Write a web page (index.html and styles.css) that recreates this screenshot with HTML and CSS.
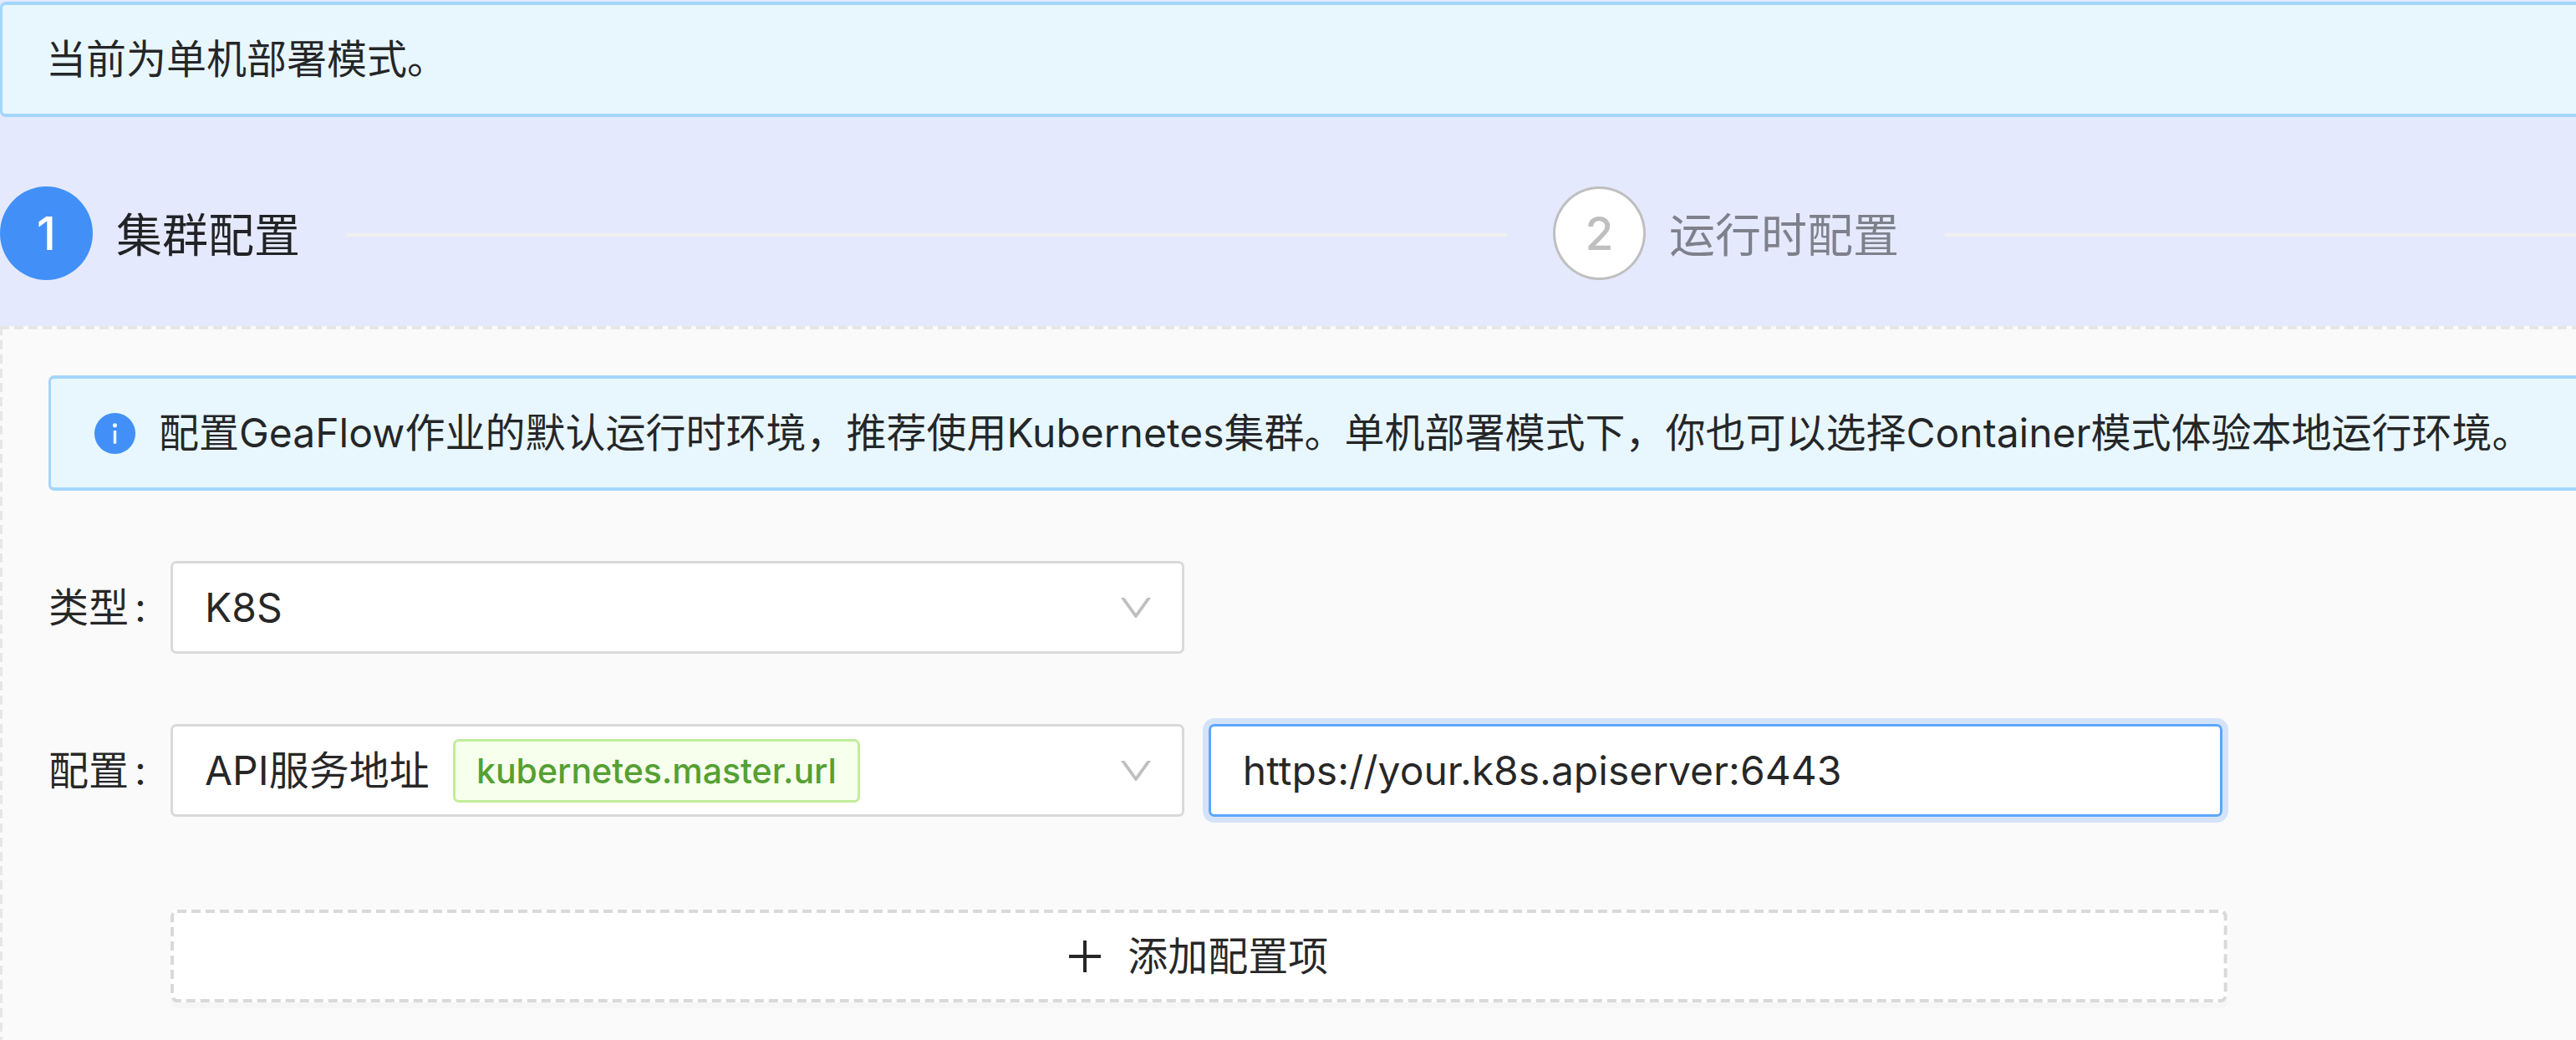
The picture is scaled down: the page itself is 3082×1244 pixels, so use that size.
FILE: index.html
```html
<!DOCTYPE html>
<html lang="zh-CN">
<head>
<meta charset="utf-8">
<title>集群配置</title>
<link rel="stylesheet" href="styles.css">
</head>
<body>
<div class="alert alert-top">当前为单机部署模式。</div>

<ol class="steps">
  <li class="step step-active">
    <span class="step-icon">1</span>
    <span class="step-title">集群配置</span>
    <span class="step-line"></span>
  </li>
  <li class="step">
    <span class="step-icon">2</span>
    <span class="step-title">运行时配置</span>
    <span class="step-line"></span>
  </li>
</ol>

<main class="panel">
  <div class="alert alert-info">
    <svg class="info-icon" viewBox="64 64 896 896" aria-hidden="true"><path fill="currentColor" d="M512 64C264.600 64 64 264.600 64 512s200.600 448 448 448 448-200.600 448-448S759.400 64 512 64zm32 664c0 4.400-3.600 8-8 8h-48c-4.400 0-8-3.600-8-8V456c0-4.400 3.600-8 8-8h48c4.400 0 8 3.600 8 8v272zm-32-344a48.010 48.010 0 0 1 0-96 48.010 48.010 0 0 1 0 96z"/></svg>
    <span>配置GeaFlow作业的默认运行时环境，推荐使用Kubernetes集群。单机部署模式下，你也可以选择Container模式体验本地运行环境。</span>
  </div>

  <form class="form">
    <div class="row">
      <label class="label" for="type">类型<span class="colon">:</span></label>
      <div class="fields">
        <div class="select">
          <select class="control" id="type"><option>K8S</option></select>
          <svg class="chevron" viewBox="0 0 1024 1024" aria-hidden="true"><path fill="currentColor" d="M884 256h-75c-5.100 0-9.900 2.500-12.900 6.600L512 654.200 227.900 262.600c-3-4.100-7.800-6.600-12.900-6.600h-75c-6.500 0-10.300 7.400-6.500 12.700l352.600 486.100c12.800 17.600 39 17.600 51.700 0l352.600-486.100c3.900-5.300.1-12.700-6.400-12.700z"/></svg>
        </div>
      </div>
    </div>

    <div class="row">
      <label class="label" for="key">配置<span class="colon">:</span></label>
      <div class="fields">
        <div class="select">
          <select class="control" id="key"><option>API服务地址</option></select>
          <span class="tag">kubernetes.master.url</span>
          <svg class="chevron" viewBox="0 0 1024 1024" aria-hidden="true"><path fill="currentColor" d="M884 256h-75c-5.100 0-9.900 2.500-12.900 6.600L512 654.200 227.900 262.600c-3-4.100-7.800-6.600-12.900-6.600h-75c-6.500 0-10.300 7.400-6.500 12.700l352.600 486.100c12.800 17.600 39 17.600 51.700 0l352.600-486.100c3.900-5.300.1-12.700-6.400-12.700z"/></svg>
        </div>
        <input class="control control-focused" type="text" aria-label="配置值" value="https://your.k8s.apiserver:6443">
      </div>
    </div>

    <div class="row row-add">
      <button class="add" type="button">
        <svg class="add-outline" aria-hidden="true"><rect x="2" y="2" rx="6"/></svg>
        <svg class="plus" viewBox="0 0 38 38" aria-hidden="true"><path d="M19 0V38M0 19H38" stroke="currentColor" stroke-width="4"/></svg>
        <span>添加配置项</span>
      </button>
    </div>
  </form>
</main>
</body>
</html>
```

FILE: styles.css
```css
* {
  box-sizing: border-box;
}

body {
  display: flex;
  flex-direction: column;
  min-height: 100vh;
  margin: 0;
  padding-top: 2px;
  overflow-x: hidden;
  background: #e5e9fd;
  color: rgba(0, 0, 0, 0.85);
  font-family: Inter, "Noto Sans CJK SC", sans-serif;
  font-size: 48px;
  line-height: 76px;
}

.alert {
  display: flex;
  align-items: center;
  min-height: 138px;
  padding: 27px 0 27px 52px;
  border: 4px solid #a3d6fb;
  border-width: 4px 0 4px 3px;
  border-radius: 7px 0 0 7px;
  background: #e8f6fe;
  white-space: nowrap;
}

.steps {
  display: grid;
  grid-template-columns: 58.5% 1fr;
  gap: 55px;
  margin: 0;
  padding: 83px 0 55px;
  list-style: none;
}

.step {
  display: flex;
  align-items: center;
  color: rgba(0, 0, 0, 0.45);
  font-size: 55px;
  white-space: nowrap;
}

.step-active {
  color: rgba(0, 0, 0, 0.85);
}

.step-icon {
  display: flex;
  align-items: center;
  justify-content: center;
  width: 111px;
  height: 112px;
  margin-right: 28px;
  border: 3px solid #bfbfbf;
  border-radius: 50%;
  background: #fff;
  color: #bfbfbf;
  font-weight: 500;
}

.step-active .step-icon {
  border-color: #4290f7;
  background: #4290f7;
  color: #fff;
}

.step-title,
.step-line {
  margin-top: 3px;
}

.step-line {
  flex: 1;
  height: 4px;
  margin-left: 55px;
  background: #f0f0f0;
}

.panel {
  flex: 1;
  padding: 59px 0 0 58px;
  background:
    repeating-linear-gradient(to right, #e6e6e6 0 11px, #fafafa 11px 17px) 0 0 / 100% 4px no-repeat,
    repeating-linear-gradient(to bottom, #e6e6e6 0 11px, #fafafa 11px 17px) 0 0 / 3px 100% no-repeat,
    #fafafa;
}

.info-icon {
  width: 49px;
  height: 49px;
  margin-right: 28px;
  color: #4290f7;
}

.form {
  display: flex;
  flex-direction: column;
  gap: 84px;
  width: 86.2%;
  margin-top: 84px;
}

.row {
  display: grid;
  grid-template-columns: 146px 1fr;
  align-items: center;
}

.row-add {
  margin-top: 27px;
}

.colon {
  margin-left: 7px;
}

.fields {
  display: grid;
  grid-template-columns: 1fr 1fr;
  gap: 29px;
  padding-right: 6px;
}

.select {
  position: relative;
}

.control {
  display: block;
  width: 100%;
  height: 111px;
  padding: 0 38px;
  border: 3px solid #d9d9d9;
  border-radius: 7px;
  outline: 0;
  appearance: none;
  background: #fff;
  color: rgba(0, 0, 0, 0.85);
  font: inherit;
}

.control-focused {
  border-color: #5ba7fb;
  box-shadow: 0 0 0 7px #d5e3fa;
}

.chevron {
  position: absolute;
  top: 32px;
  right: 34px;
  width: 48px;
  height: 48px;
  color: #bfbfbf;
  pointer-events: none;
}

.tag {
  position: absolute;
  top: 18px;
  left: 338px;
  height: 76px;
  padding: 0 25px;
  border: 3px solid #c2ec99;
  border-radius: 7px;
  background: #f7ffed;
  color: #55a032;
  font-size: 41px;
  font-weight: 500;
  line-height: 70px;
  pointer-events: none;
}

.add {
  position: relative;
  display: flex;
  grid-column: 2;
  align-items: center;
  justify-content: center;
  gap: 32px;
  height: 111px;
  border: 0;
  border-radius: 7px;
  background: #fff;
  box-shadow: 0 7px 0 rgba(0, 0, 0, 0.016);
  color: rgba(0, 0, 0, 0.85);
  font: inherit;
}

.add-outline {
  position: absolute;
  inset: 0;
  width: 100%;
  height: 100%;
}

.add-outline rect {
  width: calc(100% - 4px);
  height: calc(100% - 4px);
  fill: none;
  stroke: #d9d9d9;
  stroke-width: 4px;
  stroke-dasharray: 11 6;
}

.plus {
  width: 38px;
  height: 38px;
}
```
